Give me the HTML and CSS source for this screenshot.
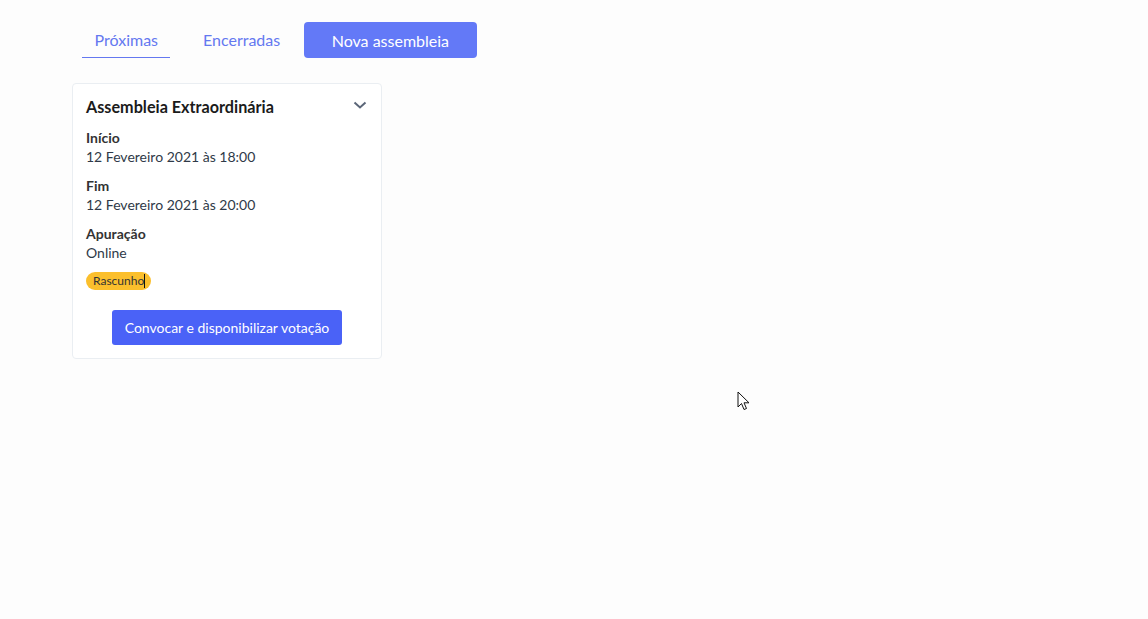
FILE: index.html
```html
<!DOCTYPE html>
<html>
<head>
  <meta charset="utf-8">
  <title>Assembleias</title>
  <link rel="stylesheet" href="styles.css">
</head>
<body>
  <div class="page">
    <div class="toolbar">
      <div class="tab tab-active">Próximas</div>
      <div class="tab">Encerradas</div>
      <button class="btn-new">Nova assembleia</button>
    </div>

    <div class="card">
      <div class="card-header">
        <h3 class="card-title">Assembleia Extraordinária</h3>
        <svg class="chevron" width="14" height="10" viewBox="0 0 14 10">
          <path d="M1.5 2.5 L7 7.5 L12.5 2.5" fill="none" stroke="#5b6678" stroke-width="2"/>
        </svg>
      </div>
      <div class="field">
        <div class="field-label">Início</div>
        <div class="field-value">12 Fevereiro 2021 às 18:00</div>
      </div>
      <div class="field">
        <div class="field-label">Fim</div>
        <div class="field-value">12 Fevereiro 2021 às 20:00</div>
      </div>
      <div class="field">
        <div class="field-label">Apuração</div>
        <div class="field-value">Online</div>
      </div>
      <div class="status">
        <span class="badge">Rascunho<span class="caret"></span></span>
      </div>
      <div class="card-actions">
        <button class="btn-primary">Convocar e disponibilizar votação</button>
      </div>
    </div>
  </div>

  <svg class="pointer" width="14" height="21" viewBox="0 0 14 21">
    <path d="M1 1 L1 16 L4.5 12.5 L7 18.5 L9.5 17.5 L7 11.8 L12 11.8 Z" fill="#fff" stroke="#111" stroke-width="1"/>
  </svg>
</body>
</html>
```

FILE: styles.css
```css
body {
  margin: 0;
  background: #fdfdfd;
  font-family: Lato, "Liberation Sans", sans-serif;
  color: #333;
}
.page {
  padding: 22px 72px;
}
.toolbar {
  display: flex;
  align-items: stretch;
  margin-left: 10px;
  margin-bottom: 25px;
}
.tab {
  height: 36px;
  line-height: 36px;
  padding: 0 12px;
  margin-right: 21px;
  font-size: 16px;
  color: #6478f0;
  box-sizing: border-box;
}
.tab-active {
  padding: 0 12px 0 12.5px;
  border-bottom: 1px solid #6478f0;
}
.tab:nth-child(2) {
  margin-right: 12px;
}
.btn-new {
  height: 36px;
  padding: 0 27.5px;
  font-family: inherit;
  font-size: 16px;
  color: #fff;
  background: #6379f7;
  border: none;
  border-radius: 4px;
}
.card {
  width: 310px;
  box-sizing: border-box;
  padding: 13px 13px 13px;
  background: #fff;
  border: 1px solid #eaeef2;
  border-radius: 4px;
}
.card-header {
  display: flex;
  justify-content: space-between;
  align-items: flex-start;
  margin-bottom: 11px;
}
.card-title {
  margin: 0;
  font-size: 16.2px;
  line-height: 20px;
  font-weight: 700;
  color: #1b1b1b;
}
.chevron {
  margin-top: 3px;
  margin-right: 1px;
}
.field {
  font-size: 14px;
  line-height: 19px;
  margin-bottom: 10px;
}
.field-label {
  font-weight: 700;
  color: #333;
}
.field-value {
  color: #2f3a48;
}
.status {
  display: flex;
}
.badge {
  position: relative;
  height: 18px;
  line-height: 18px;
  padding: 0 7px;
  font-size: 12px;
  color: #333;
  background: #fbbf2c;
  border-radius: 9px;
}
.caret {
  position: absolute;
  right: 6px;
  top: 2px;
  width: 1px;
  height: 14px;
  background: #111;
}
.card-actions {
  display: flex;
  justify-content: center;
  margin-top: 20px;
}
.btn-primary {
  height: 35px;
  padding: 0 13px;
  font-family: inherit;
  font-size: 14px;
  color: #fff;
  background: #4a62f7;
  border: none;
  border-radius: 3px;
}
.pointer {
  position: absolute;
  left: 737px;
  top: 391px;
}
```
